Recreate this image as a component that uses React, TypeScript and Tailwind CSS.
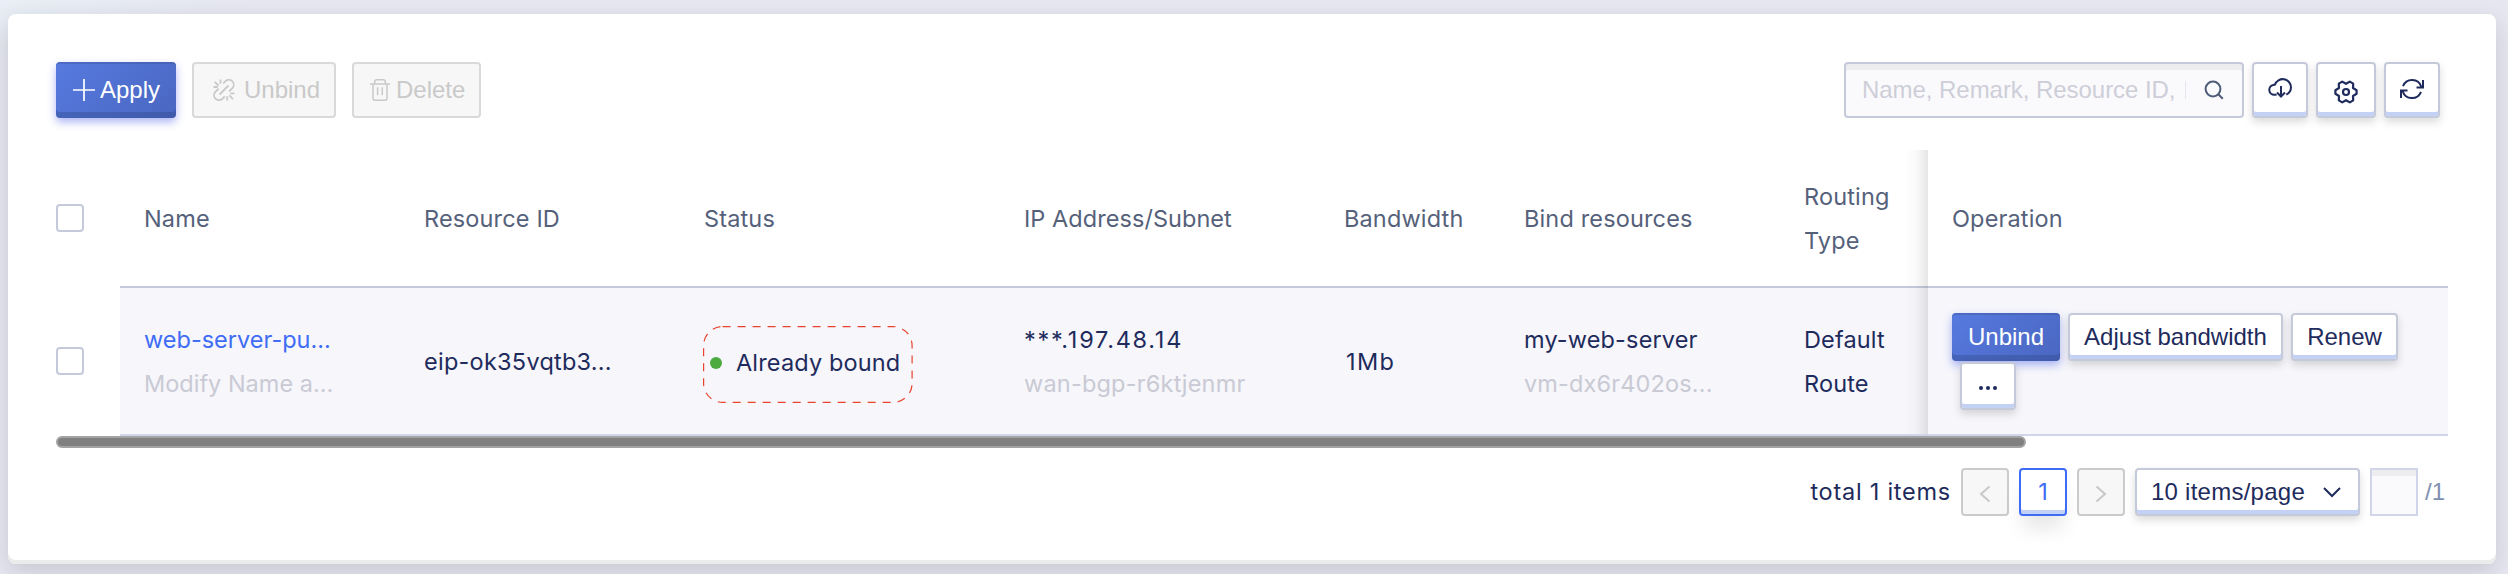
import React from "react";
import type { ReactNode } from "react";

const sans = "font-['Inter','Liberation_Sans',sans-serif]";
const arial = "font-['Liberation_Sans',Arial,sans-serif] text-2xl";

const softBase =
  "flex items-center rounded border-2 border-[#c5cadb] bg-white text-[#1e2b5c] shadow-[inset_0_-4px_0_#c3d1f4,0_4px_8px_rgba(0,0,0,0.15)]";
const softButton = `${softBase} justify-center`;
const blueButton =
  "flex items-center rounded bg-linear-[135deg] from-[#567ae0] to-[#4a66c0] text-white shadow-[inset_0_2px_0_rgba(60,80,150,0.35),inset_0_-6px_0_rgba(50,75,140,0.4),0_4px_8px_rgba(70,90,230,0.45)]";
const disabledButton = "flex items-center rounded border-2 border-[#d9d9d9] bg-[#f7f7f7] text-[#c9c9c9]";
const pagerDisabled =
  "flex size-12 items-center justify-center rounded border-2 border-[#cbcbcb] bg-[#f7f7f7] pt-1 text-[#c8c8c8]";

function PlusIcon() {
  return (
    <svg width="24" height="24" viewBox="0 0 24 24" fill="none" stroke="currentColor" strokeWidth="1.7">
      <path d="M12 1v22M1 12h22" />
    </svg>
  );
}

function UnlinkIcon() {
  return (
    <svg width="22" height="22" viewBox="0 0 22 22" fill="none" stroke="currentColor" strokeWidth="1.8">
      <path d="M10.300 4.300l1.900-1.900a4.900 4.900 0 0 1 7.200 6.700l-3.300 3.300M11.800 17.400l-2.200 2.200a4.900 4.900 0 0 1-7.200-6.700l3.200-3.300M6.500 15.500l9-9" />
      <path d="M7.500 .500v4.300M1.800 3l3.800 3.600M.500 8h4.300M17.200 14.300h4.300M16.400 16.400l3.600 3.700M14.200 17.300v4.300" />
    </svg>
  );
}

function TrashIcon() {
  return (
    <svg width="20" height="22" viewBox="0 0 20 22" fill="none" stroke="currentColor" strokeWidth="1.5">
      <path d="M0 5h20M4.700 5V2.800q0-2 2-2h6.600q2 0 2 2V5M3 5v14.200q0 2 2 2h10q2 0 2-2V5M7.600 8.300v8M12.300 8.300v8" />
    </svg>
  );
}

function SearchIcon() {
  return (
    <svg width="20" height="20" viewBox="0 0 20 20" fill="none" stroke="currentColor" strokeWidth="2">
      <circle cx="9" cy="9" r="7.400" />
      <path d="M14.300 14.300l4.500 4.500" />
    </svg>
  );
}

function CloudIcon() {
  return (
    <svg className="mb-1" width="24" height="20" viewBox="0 0 24 20" fill="none" stroke="currentColor" strokeWidth="2">
      <path d="M8.600 16.800H6.300a5 5 0 0 1-1-9.900l1.600-.3A8.300 8.300 0 0 1 23 9.300c0 3.300-1.800 6-4.700 7.400" />
      <path d="M13 8v10.500M9 14.500l4 4 4-4" />
    </svg>
  );
}

function GearIcon() {
  return (
    <svg className="mt-1" width="26" height="26" viewBox="0 0 26 26" fill="none" stroke="currentColor" strokeWidth="2.200" strokeLinejoin="round">
      <path d="M23.600 11.200v3.600L20 17l.2 4.400-3.400 2L13 21.200l-3.800 2.200-3.400-2L6 17l-3.600-2.200v-3.600L6 9l-.2-4.400 3.400-2L13 4.800l3.800-2.200 3.400 2L20 9z" />
      <circle cx="13" cy="13" r="3" />
    </svg>
  );
}

function RefreshIcon() {
  return (
    <svg className="mb-0.5" width="24" height="20" viewBox="0 0 24 20" fill="none" stroke="currentColor" strokeWidth="2">
      <path d="M3 7.200A9.700 9.700 0 0 1 21.300 7.800M23 1v7.500h-6.500M21 12.800A9.700 9.700 0 0 1 2.700 12.200M1 19v-7.500h6.500" />
    </svg>
  );
}

function Checkbox() {
  return <div className="size-7 rounded border-2 border-[#c5cadb] bg-white" />;
}

function Header({ children }: { children: ReactNode }) {
  return <div className="pl-6 pt-px">{children}</div>;
}

const cols = "grid grid-cols-[280px_280px_320px_320px_180px_280px_148px_520px]";
const muted = "text-[#c9cad4]";

export default function App() {
  return (
    <div className={`h-[574px] overflow-hidden bg-linear-to-br from-[#e9eff6] via-[#e6e7f1] via-5% to-[#e6e7f1] pl-2 pt-[14px] ${sans} text-[23.5px] tracking-[0.15px] text-[#1e2b5c]`}>
      <div className="flex h-[550px] w-[2488px] flex-col rounded-lg bg-white px-12 pt-12 shadow-[inset_0_-4px_0_#ebebeb,0_8px_24px_rgba(0,0,0,0.14)]">
        <div className={`flex h-14 gap-4 ${arial} tracking-normal`}>
          <button className={`${blueButton} h-14 w-[120px] gap-1 pl-4`}>
            <PlusIcon />
            Apply
          </button>
          <button className={`${disabledButton} h-14 w-36 gap-[9px] pl-[19px]`}>
            <UnlinkIcon />
            Unbind
          </button>
          <button className={`${disabledButton} h-14 w-[129px] gap-[6px] pl-4`}>
            <TrashIcon />
            Delete
          </button>
          <div className="ml-auto mr-2 flex gap-2">
            <div className="flex h-14 w-[400px] items-center rounded border-2 border-[#c5cadb] bg-[#fafafc] pl-4 pr-[18px] text-[#cdced8] shadow-[inset_0_6px_0_#ededef]">
              <span className="tracking-[-0.05px]">Name, Remark, Resource ID,</span>
              <span className="ml-auto h-[18px] w-px bg-[#e6e7ee]" />
              <span className="ml-[18px] text-[#4f5d78]"><SearchIcon /></span>
            </div>
            <button className={`${softButton} w-14`}><CloudIcon /></button>
            <button className={`${softButton} w-[60px]`}><GearIcon /></button>
            <button className={`${softButton} w-14`}><RefreshIcon /></button>
          </div>
        </div>

        <div className="relative mt-8 flex">
          <div className="w-16">
            <div className="flex h-[136px] items-center"><Checkbox /></div>
            <div className="flex h-[150px] items-center"><Checkbox /></div>
          </div>
          <div className="leading-[44px]">
            <div className={`${cols} h-[138px] items-center border-b-2 border-[#c5cadb] text-[#55617a]`}>
              <Header>Name</Header>
              <Header>Resource ID</Header>
              <Header>Status</Header>
              <Header><span className="tracking-[0.05px]">IP Address/Subnet</span></Header>
              <Header>Bandwidth</Header>
              <Header>Bind resources</Header>
              <Header>Routing<br />Type</Header>
              <Header>Operation</Header>
            </div>
            <div className={`${cols} h-[148px] items-center border-b-2 border-[#d1d5ea] bg-[#f6f6fb]`}>
              <div className="pl-6 pt-px tracking-normal">
                <div className="text-[#3f6cf5]">web-server-pu...</div>
                <div className={muted}>Modify Name a...</div>
              </div>
              <div className="pl-6 pt-px tracking-[0.25px]">eip-ok35vqtb3...</div>
              <div className="relative ml-[23px] mt-[7px] flex h-[77px] w-[210px] items-center pl-[7px]">
                <svg className="absolute inset-0" width="210" height="77" fill="none" stroke="#e8432e" strokeWidth="1.2">
                  <rect x=".6" y=".6" width="208.500" height="75.800" rx="19" strokeDasharray="8 7" />
                </svg>
                <span className="mb-1 size-3 rounded-full bg-[#4caa3f]" />
                <span className="mb-1 ml-[14px]">Already bound</span>
              </div>
              <div className="pl-6 pt-px">
                <div className="tracking-[1.75px]">***.197.48.14</div>
                <div className={`${muted} tracking-[0.2px]`}>wan-bgp-r6ktjenmr</div>
              </div>
              <div className="pl-[26px] pt-px tracking-[1.4px]">1Mb</div>
              <div className="pl-6 pt-px">
                <div>my-web-server</div>
                <div className={muted}>vm-dx6r402os...</div>
              </div>
              <div className="pl-6 pt-px">Default<br />Route</div>
              <div className={`flex h-full flex-wrap content-start gap-x-2 gap-y-px pl-6 pr-10 pt-[25px] ${arial} tracking-normal`}>
                <button className={`${blueButton} h-12 w-[108px] justify-center`}>Unbind</button>
                <button className={`${softButton} h-12 w-[215px]`}>Adjust bandwidth</button>
                <button className={`${softButton} h-12 w-[107px]`}>Renew</button>
                <button className={`${softButton} ml-2 h-12 w-14 gap-[3px] pt-1`}>
                  <span className="size-1 rounded-full bg-current" />
                  <span className="size-1 rounded-full bg-current" />
                  <span className="size-1 rounded-full bg-current" />
                </button>
              </div>
            </div>
          </div>
          <div className="absolute left-[1848px] top-0 h-[284px] w-6 bg-linear-to-r from-transparent via-black/2 to-black/10" />
        </div>

        <div className="h-3 w-[1970px] rounded-full border-2 border-[#a3a3a3] bg-[#808080]" />

        <div className="mt-5 flex items-center justify-end">
          <span className="mr-[10px] tracking-[0.75px]">total 1 items</span>
          <button className={`${pagerDisabled} mr-[10px]`}>
            <svg width="12" height="18" viewBox="0 0 12 18" fill="none" stroke="currentColor" strokeWidth="2"><path d="M10.500 1.500L2 9l8.500 7.500" /></svg>
          </button>
          <button className="mr-[10px] flex size-12 items-center justify-center rounded border-2 border-[#3f6cf5] bg-white text-[#3f6cf5] shadow-[inset_0_-4px_0_#c3d1f4,0_16px_20px_-4px_rgba(0,0,0,0.1)]">1</button>
          <button className={`${pagerDisabled} mr-[10px]`}>
            <svg width="12" height="18" viewBox="0 0 12 18" fill="none" stroke="currentColor" strokeWidth="2"><path d="M1.500 1.500L10 9l-8.500 7.500" /></svg>
          </button>
          <button className={`${softBase} mr-[10px] h-12 w-[225px] justify-between pl-[14px] pr-[17px] ${arial} tracking-[0.25px]`}>
            10 items/page
            <svg width="18" height="12" viewBox="0 0 18 12" fill="none" stroke="currentColor" strokeWidth="2"><path d="M1 2l8 8 8-8" /></svg>
          </button>
          <div className="size-12 border-2 border-[#d1d5ea] bg-[#fafafc] shadow-[inset_0_6px_0_#ededef]" />
          <span className={`ml-[7px] mr-[3px] ${arial} tracking-normal text-[#8090b0]`}>/1</span>
        </div>
      </div>
    </div>
  );
}
